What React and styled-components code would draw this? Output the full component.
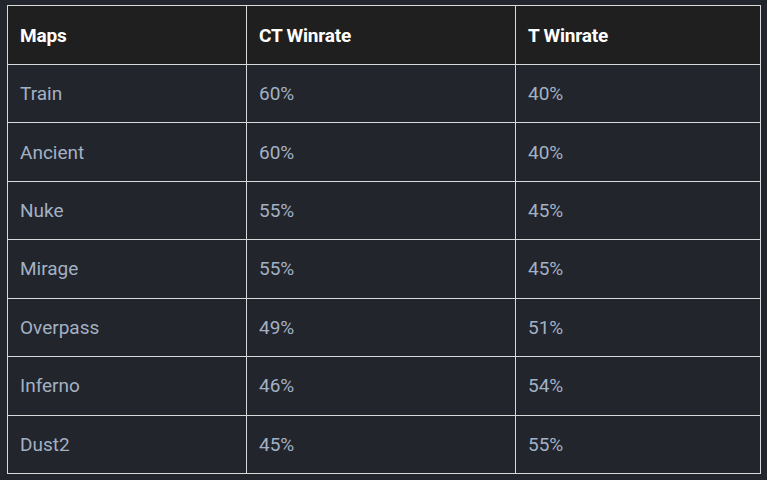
import React from "react";
import styled, { createGlobalStyle } from "styled-components";

const GlobalStyle = createGlobalStyle`
  html, body {
    margin: 0;
    background: #22252c;
  }
`;

const rows = [
  ["Train", "60%", "40%"],
  ["Ancient", "60%", "40%"],
  ["Nuke", "55%", "45%"],
  ["Mirage", "55%", "45%"],
  ["Overpass", "49%", "51%"],
  ["Inferno", "46%", "54%"],
  ["Dust2", "45%", "55%"],
];

const Page = styled.div`
  padding: 5px 7px 0 7px;
  width: 753px;
  font-family: Roboto, "Noto Sans", sans-serif;
`;

const Table = styled.table`
  width: 753px;
  border-collapse: collapse;
  table-layout: fixed;
`;

const HeadCell = styled.th`
  height: 58px;
  padding: 0 12px;
  background: #1f1f1f;
  border: 1px solid #d9d9d9;
  color: #ffffff;
  font-size: 19px;
  font-weight: 700;
  letter-spacing: -0.2px;
  text-align: left;
`;

const Cell = styled.td`
  height: 57.43px;
  padding: 0 12px;
  border: 1px solid #d9d9d9;
  color: #a3b1c4;
  font-size: 19px;
  text-align: left;
`;

function App() {
  return (
    <Page>
      <GlobalStyle />
      <Table>
        <colgroup>
          <col style={{ width: 239 }} />
          <col style={{ width: 269 }} />
          <col style={{ width: 245 }} />
        </colgroup>
        <thead>
          <tr>
            <HeadCell>Maps</HeadCell>
            <HeadCell>CT Winrate</HeadCell>
            <HeadCell>T Winrate</HeadCell>
          </tr>
        </thead>
        <tbody>
          {rows.map((r) => (
            <tr key={r[0]}>
              {r.map((c, i) => (
                <Cell key={i}>{c}</Cell>
              ))}
            </tr>
          ))}
        </tbody>
      </Table>
    </Page>
  );
}

export default App;
